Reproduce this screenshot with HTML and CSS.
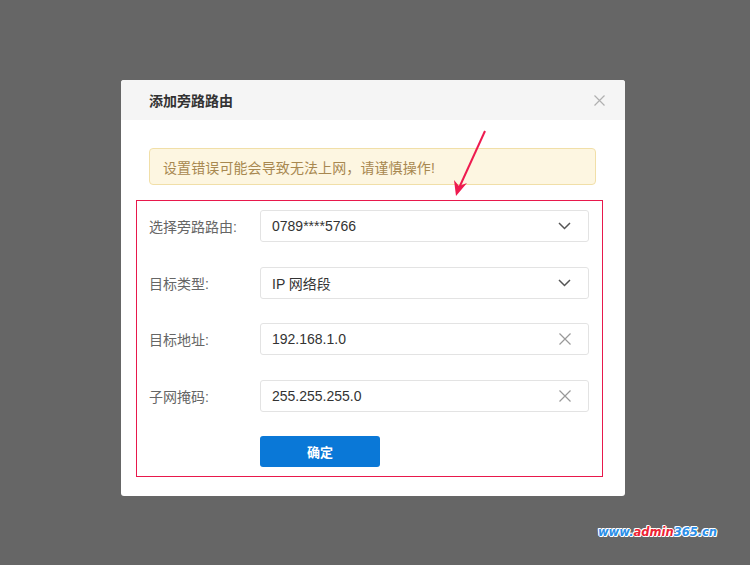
FILE: index.html
```html
<!DOCTYPE html>
<html lang="zh-CN">
<head>
  <meta charset="UTF-8" />
  <title>添加旁路路由</title>
  <link rel="stylesheet" href="styles.css">
</head>
<body>
  <div class="dialog">
    <div class="dialog-head">
      <span class="dialog-title">添加旁路路由</span>
      <svg class="close" width="11" height="11" viewBox="0 0 11 11"><path d="M0.5 0.5L10.5 10.5M10.5 0.5L0.5 10.5" stroke="#b0b0b0" stroke-width="1.2" fill="none"/></svg>
    </div>
    <div class="dialog-body">
      <div class="warning">设置错误可能会导致无法上网，请谨慎操作!</div>
      <div class="form-box">
        <div class="row">
          <label>选择旁路路由:</label>
          <div class="field">
            <span>0789****5766</span>
            <svg width="13" height="8" viewBox="0 0 13 8"><path d="M1 1L6.5 6.5L12 1" stroke="#555" stroke-width="1.5" fill="none"/></svg>
          </div>
        </div>
        <div class="row">
          <label>目标类型:</label>
          <div class="field">
            <span>IP 网络段</span>
            <svg width="13" height="8" viewBox="0 0 13 8"><path d="M1 1L6.5 6.5L12 1" stroke="#555" stroke-width="1.5" fill="none"/></svg>
          </div>
        </div>
        <div class="row">
          <label>目标地址:</label>
          <div class="field">
            <span>192.168.1.0</span>
            <svg width="12" height="12" viewBox="0 0 12 12"><path d="M0.5 0.5L11.5 11.5M11.5 0.5L0.5 11.5" stroke="#999" stroke-width="1.2" fill="none"/></svg>
          </div>
        </div>
        <div class="row">
          <label>子网掩码:</label>
          <div class="field">
            <span>255.255.255.0</span>
            <svg width="12" height="12" viewBox="0 0 12 12"><path d="M0.5 0.5L11.5 11.5M11.5 0.5L0.5 11.5" stroke="#999" stroke-width="1.2" fill="none"/></svg>
          </div>
        </div>
        <div class="row">
          <label></label>
          <button class="btn">确定</button>
        </div>
      </div>
    </div>
  </div>

  <svg class="arrow" width="40" height="70" viewBox="0 0 40 70">
    <path d="M35 3L9 60" stroke="#ee1b4f" stroke-width="2" fill="none"/>
    <path d="M6 68L4 52L9 58L17 55Z" fill="#ee1b4f"/>
  </svg>

  <div class="watermark"><span class="blue">www.</span><span class="red">admin</span><span class="blue">365.cn</span></div>
</body>
</html>
```

FILE: styles.css
```css
* {
  box-sizing: border-box;
}

body {
  margin: 0;
  width: 750px;
  height: 565px;
  background: #666666;
  font-family: "Liberation Sans", "Noto Sans CJK SC", sans-serif;
  padding: 80px 0 0 121px;
  position: relative;
  overflow: hidden;
}

.dialog {
  width: 504px;
  height: 416px;
  background: #fff;
  border-radius: 3px;
  overflow: hidden;
}

.dialog-head {
  height: 40px;
  background: #f5f5f5;
  display: flex;
  align-items: center;
  justify-content: space-between;
  padding: 0 20px 0 28px;
}

.dialog-title {
  font-size: 14px;
  font-weight: bold;
  color: #333;
}

.dialog-body {
  padding: 28px 22px 0 15px;
}

.warning {
  margin: 0 7px 0 13px;
  height: 37px;
  background: #fdf6e1;
  border: 1px solid #f1dfa8;
  border-radius: 4px;
  color: #a88850;
  font-size: 14px;
  display: flex;
  align-items: center;
  padding-left: 13px;
  letter-spacing: 0.1px;
}

.form-box {
  margin-top: 15px;
  height: 277px;
  border: 1px solid #e8184c;
  padding: 9px 13px 0 12px;
  display: flex;
  flex-direction: column;
  gap: 24.5px;
}

.row {
  display: flex;
  align-items: center;
}

.row label {
  width: 111px;
  flex-shrink: 0;
  font-size: 14px;
  color: #666;
}

.field {
  width: 329px;
  height: 32px;
  border: 1px solid #e3e3e3;
  border-radius: 3px;
  display: flex;
  align-items: center;
  justify-content: space-between;
  padding: 0 17px 0 11px;
  font-size: 14px;
  color: #333;
}

.btn {
  width: 120px;
  height: 31px;
  border: none;
  border-radius: 3px;
  background: #0a78d7;
  color: #fff;
  font-family: "Noto Sans CJK SC", sans-serif;
  font-size: 13px;
  font-weight: bold;
}

.arrow {
  position: absolute;
  left: 450px;
  top: 128px;
}

.watermark {
  position: absolute;
  left: 598px;
  top: 525px;
  font-family: "DejaVu Sans", sans-serif;
  font-size: 11.5px;
  font-weight: bold;
  font-style: italic;
  text-shadow: 1px 0 #fff, -1px 0 #fff, 0 1px #fff, 0 -1px #fff, 1px 1px #fff, -1px -1px #fff;
}

.watermark .blue {
  color: #2a8ee8;
}

.watermark .red {
  color: #ee2233;
}
```
